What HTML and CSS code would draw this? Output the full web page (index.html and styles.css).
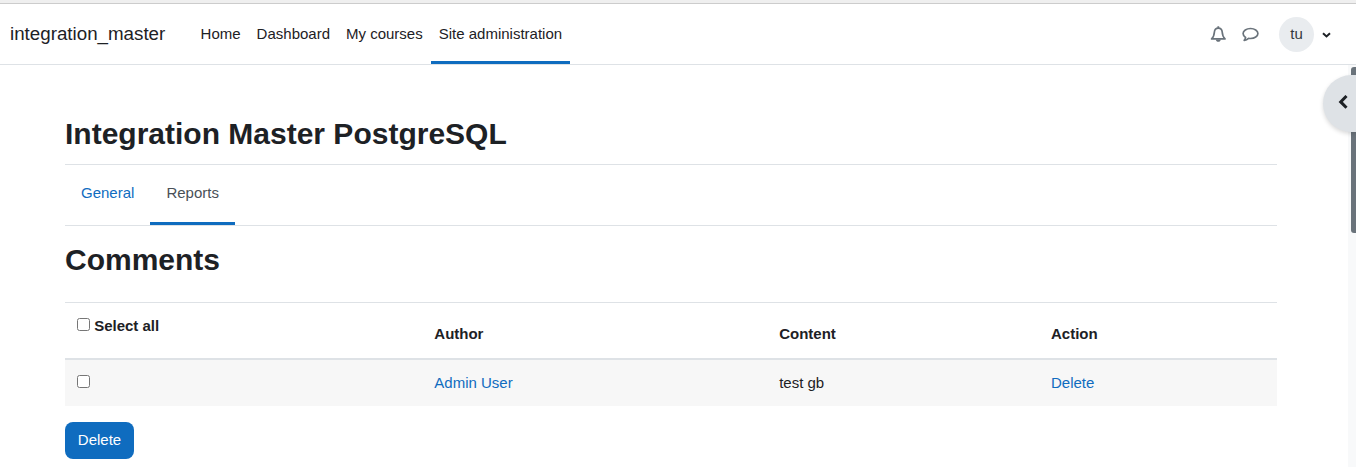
FILE: index.html
```html
<!DOCTYPE html>
<html lang="en">
<head>
    <meta charset="UTF-8">
    <meta name="viewport" content="width=device-width, initial-scale=1.0">
    <title>Comments</title>
    <link rel="stylesheet" href="styles.css">
</head>
<body>
    <nav class="navbar">
        <a class="brand" href="#">integration_master</a>
        <ul class="primary-nav">
            <li><a href="#">Home</a></li>
            <li><a href="#">Dashboard</a></li>
            <li><a href="#">My courses</a></li>
            <li><a class="active" href="#">Site administration</a></li>
        </ul>
        <div class="usernav">
            <svg class="icon" viewBox="0 0 16 16"><path class="line" d="M1.6 12.9C3.8 11 4.2 9 4.4 6 4.6 3.500 5.900 2.100 8.300 2.100s3.700 1.400 3.900 3.900c.2 3 .6 5 2.800 6.900z"/><path d="M7.400.2h1.800v2H7.400zM5.800 13.400h5C10.600 14.900 9.600 15.800 8.300 15.800s-2.300-.9-2.500-2.400z"/></svg>
            <svg class="icon comment" viewBox="0 0 17 16"><path class="line" d="M8.500 2.500c4.100 0 7.400 2.200 7.400 5s-3.300 5-7.400 5c-.7 0-1.300-.1-1.900-.2-1.300 1.100-2.700 1.800-4.400 2.100.8-.9 1.200-1.800 1.400-3C2 10.500 1.100 9.100 1.100 7.500c0-2.800 3.300-5 7.400-5z"/></svg>
            <span class="avatar">tu</span>
            <svg class="caret" viewBox="0 0 9 6"><path d="M1 1.200l3.500 3.200L8 1.200"/></svg>
        </div>
    </nav>

    <main class="page">
        <h1>Integration Master PostgreSQL</h1>
        <ul class="tabs">
            <li><a href="#">General</a></li>
            <li><a class="active" href="#">Reports</a></li>
        </ul>

        <h2>Comments</h2>
        <table class="comments">
            <thead>
                <tr>
                    <th class="col-select"><label><input type="checkbox"> Select all</label></th>
                    <th class="col-author">Author</th>
                    <th class="col-content">Content</th>
                    <th>Action</th>
                </tr>
            </thead>
            <tbody>
                <tr>
                    <td><input type="checkbox"></td>
                    <td><a href="#">Admin User</a></td>
                    <td>test gb</td>
                    <td><a href="#">Delete</a></td>
                </tr>
            </tbody>
        </table>
        <button class="btn">Delete</button>
    </main>

    <!-- scrollbar and block drawer toggle -->
    <div class="scrollbar"><div class="thumb"></div></div>
    <button class="drawer-toggle">
        <svg viewBox="0 0 10 15"><path d="M8.500 1L2.700 6.900l5.800 5.900"/></svg>
    </button>
</body>
</html>
```
FILE: styles.css
```css
* {
    box-sizing: border-box;
}

body {
    margin: 0;
    height: 467px;
    overflow: hidden;
    position: relative;
    border-top: 3px solid #efefef;
    background-color: #fff;
    color: #1d2125;
    font-family: "Liberation Sans", Arial, sans-serif;
    font-size: 15px;
    line-height: 1.5;
}

a {
    color: #0f6cbf;
    text-decoration: none;
}

ul {
    list-style: none;
    margin: 0;
    padding: 0;
    display: flex;
}

.navbar {
    display: flex;
    align-items: center;
    height: 62px;
    padding-left: 10px;
    padding-right: 25px;
    border-top: 1px solid #ccc;
    border-bottom: 1px solid #dee2e6;
}

.brand {
    color: #1d2125;
    font-size: 18.75px;
}

.primary-nav {
    height: 60px;
    margin-left: 27.3px;
}

.primary-nav a {
    display: flex;
    align-items: center;
    height: 60px;
    padding: 3px 8px 0;
    color: #1d2125;
    border-bottom: 3px solid transparent;
}

.primary-nav a.active {
    border-bottom-color: #0f6cbf;
}

.usernav {
    display: flex;
    align-items: center;
    margin-left: auto;
}

.icon {
    width: 16px;
    height: 16px;
    fill: #6a737b;
}

.icon .line {
    fill: none;
    stroke: #6a737b;
    stroke-width: 1.7;
    stroke-linejoin: round;
}

.icon.comment {
    width: 17px;
    margin-left: 16px;
}

.avatar {
    width: 35px;
    height: 35px;
    margin-left: 20px;
    border-radius: 50%;
    background-color: #e9ecef;
    color: #343a40;
    line-height: 34px;
    text-align: center;
}

.caret {
    width: 9px;
    height: 6px;
    margin: 2px 0 0 8px;
}

.caret path,
.drawer-toggle path {
    fill: none;
    stroke: #1d2125;
    stroke-width: 2;
}

.page {
    width: 1212px;
    margin-left: 65px;
    padding-top: 51px;
}

h1,
h2 {
    margin: 0;
    font-size: 30px;
    line-height: 36px;
}

h1 {
    margin-bottom: 12px;
}

.tabs {
    height: 62px;
    border-top: 1px solid #dee2e6;
    border-bottom: 1px solid #dee2e6;
}

.tabs a {
    display: flex;
    align-items: center;
    height: 60px;
    padding: 0 16px;
    border-bottom: 3px solid transparent;
}

.tabs a.active {
    color: #495057;
    border-bottom-color: #0f6cbf;
}

h2 {
    margin: 16px 0 24px;
}

.comments {
    width: 100%;
    table-layout: fixed;
    border-collapse: separate;
    border-spacing: 0;
}

.comments th,
.comments td {
    padding: 0 12px;
    text-align: left;
}

.comments th {
    height: 58px;
    padding-top: 7px;
    border-top: 1px solid #dee2e6;
    border-bottom: 2px solid #dee2e6;
}

.comments td {
    height: 46px;
    background-color: #f7f7f7;
}

.comments .col-select {
    width: 357.3px;
    padding-top: 0;
    padding-bottom: 8px;
}

.col-author {
    width: 344.9px;
}

.col-content {
    width: 271.8px;
}

input[type="checkbox"] {
    width: 13px;
    height: 13px;
    margin: 0;
}

.btn {
    display: block;
    width: 69px;
    height: 37px;
    margin-top: 16px;
    padding: 0;
    border: 0;
    border-radius: 8px;
    background-color: #0f6cbf;
    color: #fff;
    font: inherit;
}

.scrollbar {
    position: absolute;
    top: 62px;
    right: 0;
    bottom: 0;
    width: 8px;
    background-color: #f8f9fa;
}

.thumb {
    width: 5px;
    height: 166px;
    margin: 2px 0 0 3px;
    border-radius: 3px 0 0 3px;
    background-color: #6a737b;
}

.drawer-toggle {
    position: absolute;
    top: 72px;
    right: 0;
    width: 33px;
    height: 57px;
    padding: 0 0 3px 15px;
    border: 0;
    border-radius: 100px 0 0 100px;
    background-color: #dee2e6;
    box-shadow: 0 2px 4px rgba(0, 0, 0, 0.15);
    display: flex;
    align-items: center;
}

.drawer-toggle svg {
    width: 10px;
    height: 15px;
}

.drawer-toggle path {
    stroke-width: 3;
}
```
